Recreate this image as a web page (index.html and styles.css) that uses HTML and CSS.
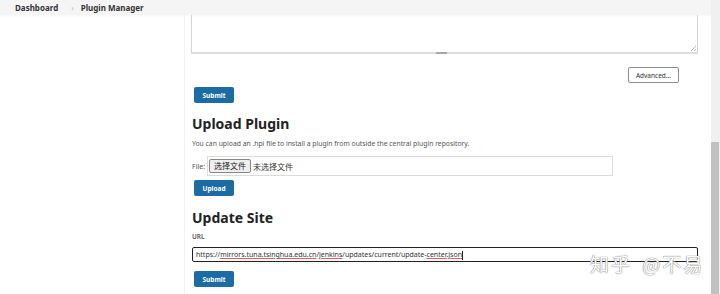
FILE: index.html
```html
<!DOCTYPE html>
<html lang="en">
<head>
    <meta charset="UTF-8">
    <meta name="viewport" content="width=device-width, initial-scale=1.0">
    <title>Plugin Manager</title>
    <link rel="stylesheet" href="styles.css">
</head>
<body>
    <div class="page">
        <div class="crumbs">
            <span class="crumb">Dashboard</span>
            <span class="sep">&#x203A;</span>
            <span class="crumb">Plugin Manager</span>
        </div>
        <div class="layout">
            <div class="side"></div>
            <div class="main">
                <div class="area"><span class="grip"></span><span class="corner"></span></div>
                <div class="adv-row">
                    <button class="btn-adv">Advanced...</button>
                </div>
                <button class="btn b-first">Submit</button>

                <h2>Upload Plugin</h2>
                <p class="desc">You can upload an .hpi file to install a plugin from outside the central plugin repository.</p>
                <div class="file-row">
                    <span class="lbl">File:</span>
                    <div class="file-box">
                        <span class="choose">选择文件</span>
                        <span class="none">未选择文件</span>
                    </div>
                </div>
                <button class="btn b-upload">Upload</button>

                <h2 class="h-site">Update Site</h2>
                <div class="url-lbl">URL</div>
                <div class="url">https://<span class="sp">mirrors.tuna.tsinghua.edu.cn</span>/<span class="sp">jenkins</span>/updates/current/update-<span class="sp">center.json</span><span class="caret"></span></div>
                <button class="btn b-last">Submit</button>
            </div>
        </div>
        <div class="mark">知乎 @不易</div>
    </div>
    <div class="scroll"><div class="thumb"></div></div>
</body>
</html>
```
FILE: styles.css
```css
body {
    margin: 0;
    width: 720px;
    height: 294px;
    overflow: hidden;
    display: flex;
    font-family: "Noto Sans", "Open Sans", sans-serif;
    color: #333;
    background: #fff;
}
.page {
    position: relative;
    flex: 1;
    display: flex;
    flex-direction: column;
}
.crumbs {
    height: 15px;
    display: flex;
    align-items: center;
    padding-left: 15px;
    background: #f5f5f5;
    box-shadow: 0 1px 2px rgba(0,0,0,0.04);
    font-size: 8px;
    font-weight: 700;
    color: #333;
}
.sep {
    color: #bbb;
    font-weight: 400;
    margin: 0 7px 0 13px;
}
.layout {
    flex: 1;
    display: flex;
}
.side {
    width: 184px;
    border-right: 1px solid #f2f2f2;
}
.main {
    flex: 1;
    padding: 0 13px 0 6px;
    display: flex;
    flex-direction: column;
    align-items: flex-start;
}
.area {
    position: relative;
    align-self: stretch;
    height: 37px;
    border: 1px solid #d4d4d4;
    border-top: 0;
    border-bottom: 2px solid #dcdcdc;
}
.grip {
    position: absolute;
    left: 244px;
    bottom: -2px;
    width: 11px;
    height: 2px;
    background: #a8a8a8;
}
.corner {
    position: absolute;
    right: 1px;
    bottom: 1px;
    width: 5px;
    height: 5px;
    background: linear-gradient(135deg, transparent 45%, #bbb 45%, #bbb 55%, transparent 55%, transparent 75%, #bbb 75%, #bbb 85%, transparent 85%);
}
.adv-row {
    align-self: stretch;
    display: flex;
    justify-content: flex-end;
    margin-top: 13px;
    padding-right: 19px;
}
.btn-adv {
    width: 51px;
    height: 16px;
    padding: 0;
    border: 1px solid #8d8d8d;
    border-radius: 2px;
    background: #fff;
    color: #333;
    font-family: inherit;
    font-size: 6.5px;
}
.btn {
    margin-left: 3px;
    width: 40px;
    height: 16px;
    padding: 0;
    border: 0;
    border-radius: 2px;
    background: #1b6ca5;
    color: #fff;
    font-family: inherit;
    font-size: 6.5px;
    font-weight: 700;
}
.b-first {
    margin-top: 4px;
}
.b-upload {
    margin-top: 4px;
}
.b-last {
    margin-top: 9px;
}
h2 {
    margin: 11px 0 0 1px;
    font-size: 14px;
    line-height: 19px;
    font-weight: 700;
    color: #222;
}
.desc {
    margin: 6px 0 0 1px;
    font-size: 6.8px;
    line-height: 9px;
    color: #555;
}
.file-row {
    margin: 8px 0 0 1px;
    display: flex;
    align-items: center;
    font-size: 7px;
    color: #555;
}
.lbl {
    width: 15px;
}
.file-box {
    width: 403px;
    height: 18px;
    border: 1px solid #dcdcdc;
    display: flex;
    align-items: center;
    padding-left: 1px;
}
.choose {
    font-family: "Noto Sans CJK SC", sans-serif;
    font-size: 8px;
    color: #222;
    background: #efefef;
    border: 1px solid #888;
    border-radius: 2px;
    padding: 0 4px;
    line-height: 12px;
}
.none {
    font-family: "Noto Sans CJK SC", sans-serif;
    font-size: 8px;
    color: #333;
    margin-left: 2px;
}
.h-site {
    margin-top: 12px;
}
.url-lbl {
    margin: 5px 0 0 1px;
    font-size: 6.5px;
    line-height: 9px;
    font-weight: 600;
    color: #555;
}
.url {
    margin: 6px 0 0 1px;
    align-self: stretch;
    height: 13px;
    border: 1.5px solid #222;
    border-radius: 2px;
    padding-left: 3px;
    font-size: 7px;
    line-height: 13px;
    color: #333;
    white-space: pre;
}
.sp {
    text-decoration: underline solid #e06060;
    text-decoration-thickness: 1px;
    text-underline-offset: 1px;
}
.caret {
    display: inline-block;
    vertical-align: middle;
    width: 1px;
    height: 9px;
    background: #222;
}
.mark {
    position: absolute;
    left: 590px;
    top: 250px;
    font-family: "Noto Sans CJK SC", sans-serif;
    font-size: 19px;
    color: #fff;
    text-shadow: 0 0 1px #777, 0 0 1px #777;
    letter-spacing: 2px;
    word-spacing: 4px;
}
.scroll {
    width: 9px;
    background: #f0f0f0;
    display: flex;
    flex-direction: column;
    justify-content: flex-end;
}
.thumb {
    height: 152px;
    margin-right: 1px;
    background: #c1c1c1;
}
```
